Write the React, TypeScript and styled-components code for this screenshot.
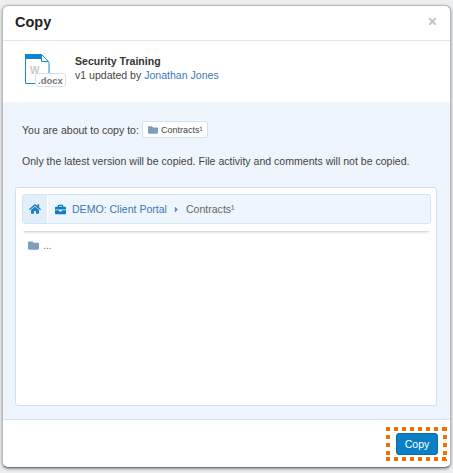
import styled, { createGlobalStyle } from "styled-components";
import { FaBriefcase, FaCaretRight, FaFolder, FaHome, FaTimes } from "react-icons/fa";

const GlobalStyle = createGlobalStyle`
    html, body {
        margin: 0;
        padding: 0;
        background: #eceef0;
    }
    body {
        font-family: "Liberation Sans", Arial, sans-serif;
        font-size: 12px;
        color: #333;
    }
`;

const Page = styled.div`
    width: 453px;
    height: 473px;
    padding: 5px 2px;
    box-sizing: border-box;
    overflow: hidden;
`;

const Modal = styled.div`
    height: 463px;
    background: #fff;
    border: 1px solid #b9b9b9;
    border-bottom-color: #777;
    border-radius: 6px;
    box-shadow: 0 1px 3px rgba(0, 0, 0, 0.4);
    box-sizing: border-box;
    display: flex;
    flex-direction: column;
    overflow: hidden;
`;

const Header = styled.header`
    height: 35px;
    flex: none;
    display: flex;
    align-items: center;
    justify-content: space-between;
    padding: 0 12px 3px 12px;
    border-bottom: 1px solid #e5e5e5;
    box-sizing: border-box;
`;

const Title = styled.h3`
    margin: 0;
    font-size: 14.5px;
    font-weight: 700;
    color: #222;
`;

const Close = styled.span`
    color: #c4c4c4;
    font-size: 11px;
    display: flex;
`;

const FileRow = styled.div`
    height: 61px;
    flex: none;
    display: flex;
    align-items: flex-start;
    gap: 9px;
    padding: 13px 0 0 22px;
    box-sizing: border-box;
`;

const FileMeta = styled.div`
    font-size: 10.55px;
    line-height: 14px;
    color: #444;
`;

const FileName = styled.div`
    font-weight: 700;
    color: #333;
`;

const Link = styled.span`
    color: #3c78b5;
`;

const Body = styled.div`
    flex: 1;
    min-height: 0;
    background: #eef5fc;
    border-bottom: 1px solid #d8e3ec;
    padding: 18px 13px 13px 12px;
    display: flex;
    flex-direction: column;
`;

const Notice = styled.div`
    display: flex;
    align-items: center;
    gap: 3px;
    height: 19px;
    padding-left: 7px;
    font-size: 10.55px;
    color: #444;
`;

const Chip = styled.span`
    display: inline-flex;
    align-items: center;
    gap: 3px;
    height: 17px;
    padding: 0 5px;
    background: #fff;
    border: 1px solid #cfe3f3;
    border-radius: 2px;
    font-size: 9px;
    color: #444;
    box-sizing: border-box;
`;

const FolderIcon = styled(FaFolder)<{ $size: number }>`
    color: #7e9dbd;
    font-size: ${(p) => p.$size}px;
`;

const Note = styled(Notice)`
    margin-top: 15px;
    margin-bottom: 19px;
    height: 14px;
`;

const Panel = styled.div`
    flex: 1;
    background: #fff;
    border: 1px solid #cde3f3;
    border-radius: 3px;
    padding: 6px 5px 0 6px;
    box-sizing: border-box;
`;

const BreadcrumbBar = styled.div`
    padding-bottom: 7px;
    border-radius: 0 0 3px 3px;
    box-shadow: 0 3px 3px -2px rgba(0, 0, 0, 0.22);
`;

const Breadcrumb = styled.div`
    height: 30px;
    display: flex;
    align-items: center;
    background: #eef5fc;
    border: 1px solid #cfe6f6;
    border-radius: 3px;
    box-sizing: border-box;
    font-size: 10.55px;
`;

const HomeCell = styled.div`
    width: 25px;
    height: 100%;
    flex: none;
    display: flex;
    align-items: center;
    justify-content: center;
    background: #e2eef8;
    border-right: 1px solid #fff;
    box-sizing: border-box;
    color: #1b7fc4;
    font-size: 12px;
`;

const Crumbs = styled.div`
    display: flex;
    align-items: center;
    padding-left: 7px;
    gap: 5px;
`;

const BriefIcon = styled(FaBriefcase)`
    color: #0a7cc4;
    font-size: 11px;
    margin-right: 1px;
`;

const CrumbLink = styled.span`
    color: #3c78b5;
`;

const Caret = styled(FaCaretRight)`
    color: #5b92bd;
    font-size: 9px;
`;

const Current = styled.span`
    color: #666;
`;

const Listing = styled.div`
    display: flex;
    align-items: center;
    gap: 4px;
    padding: 8px 6px;
    color: #777;
    font-size: 10.55px;
`;

const Footer = styled.footer`
    height: 47px;
    flex: none;
    display: flex;
    align-items: flex-start;
    justify-content: flex-end;
    padding: 7px 3px 0 0;
    box-sizing: border-box;
`;

const dot = "#f46e00";

// square dots, the browser's dotted border comes out round
const Highlight = styled.div`
    padding: 6px 9px 6px 10px;
    display: flex;
    background:
        repeating-linear-gradient(90deg, ${dot} 0 4px, transparent 4px 8px) top left / 100% 4px no-repeat,
        repeating-linear-gradient(90deg, ${dot} 0 4px, transparent 4px 8px) bottom left / 100% 4px no-repeat,
        repeating-linear-gradient(180deg, ${dot} 0 4px, transparent 4px 8px) top left / 4px 100% no-repeat,
        repeating-linear-gradient(180deg, ${dot} 0 4px, transparent 4px 8px) top right / 4px 100% no-repeat;
`;

const Button = styled.button`
    width: 42px;
    height: 22px;
    padding: 0;
    background: #0a7fc6;
    border: 1px solid #0a6aa6;
    border-radius: 3px;
    color: #fff;
    font-family: inherit;
    font-size: 10.55px;
`;

function DocxIcon() {
    return (
        <svg width="41" height="33" viewBox="0 0 41 33">
            <path d="M.5.5h16l7.5 8v21H.5z" fill="#fff" stroke="#1b8ad3" />
            <path d="M0 0h16v5H0z" fill="#0a85d1" />
            <path d="M16.5.5v7h7z" fill="#fff" stroke="#1b8ad3" />
            <text x="5" y="20" fontFamily="Liberation Sans" fontSize="10" fontWeight="700" fill="#c9c9c9">W</text>
            <rect x="10.5" y="19.5" width="30" height="13" rx="2.5" fill="#fff" stroke="#cfe3f3" />
            <text x="13" y="29.5" fontFamily="Liberation Sans" fontSize="9.5" fontWeight="700" fill="#777">.docx</text>
        </svg>
    );
}

export default function App() {
    return (
        <Page>
            <GlobalStyle />
            <Modal>
                <Header>
                    <Title>Copy</Title>
                    <Close><FaTimes /></Close>
                </Header>
                <FileRow>
                    <DocxIcon />
                    <FileMeta>
                        <FileName>Security Training</FileName>
                        v1 updated by <Link>Jonathan Jones</Link>
                    </FileMeta>
                </FileRow>
                <Body>
                    <Notice>
                        You are about to copy to:
                        <Chip><FolderIcon $size={10} />Contracts¹</Chip>
                    </Notice>
                    <Note>Only the latest version will be copied. File activity and comments will not be copied.</Note>
                    <Panel>
                        <BreadcrumbBar>
                            <Breadcrumb>
                                <HomeCell><FaHome /></HomeCell>
                                <Crumbs>
                                    <BriefIcon />
                                    <CrumbLink>DEMO: Client Portal</CrumbLink>
                                    <Caret />
                                    <Current>Contracts¹</Current>
                                </Crumbs>
                            </Breadcrumb>
                        </BreadcrumbBar>
                        <Listing>
                            <FolderIcon $size={11} />...
                        </Listing>
                    </Panel>
                </Body>
                <Footer>
                    <Highlight>
                        <Button>Copy</Button>
                    </Highlight>
                </Footer>
            </Modal>
        </Page>
    );
}
